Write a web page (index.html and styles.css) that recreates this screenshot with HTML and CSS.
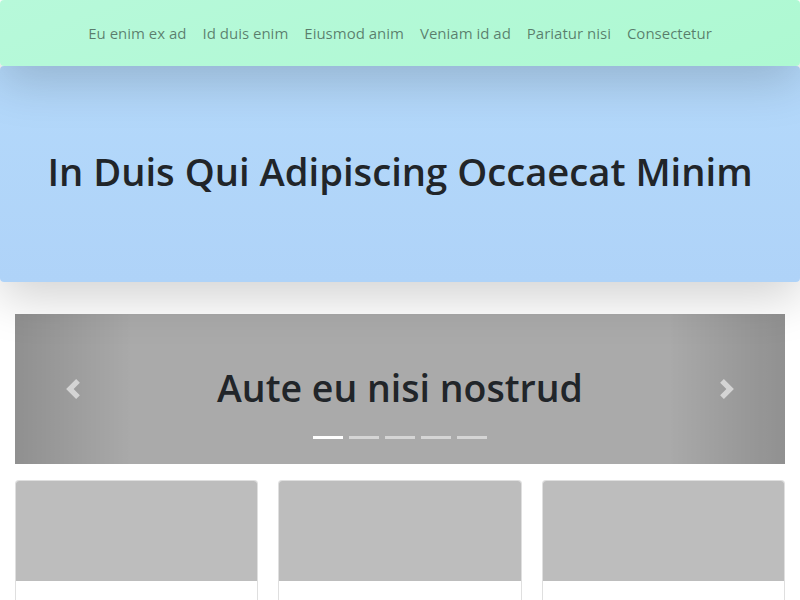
FILE: index.html
```html
<!DOCTYPE html>
<html lang="en">
<head>
<meta charset="utf-8">
<title>In Duis Qui Adipiscing Occaecat Minim</title>
<link rel="stylesheet" href="styles.css">
</head>
<body>
<nav class="navbar">
  <a class="nav-link" href="#">Eu enim ex ad</a>
  <a class="nav-link" href="#">Id duis enim</a>
  <a class="nav-link" href="#">Eiusmod anim</a>
  <a class="nav-link" href="#">Veniam id ad</a>
  <a class="nav-link" href="#">Pariatur nisi</a>
  <a class="nav-link" href="#">Consectetur</a>
</nav>
<header class="jumbotron">
  <h1 class="jumbo-title">In Duis Qui Adipiscing Occaecat Minim</h1>
</header>
<main class="container">
  <section class="carousel">
    <a class="control control-prev" href="#"><svg class="chev" viewBox="0 0 8 8"><path d="M5.25 0l-4 4 4 4 1.5-1.5L4.25 4l2.5-2.5L5.25 0z"/></svg></a>
    <h2 class="slide-title">Aute eu nisi nostrud</h2>
    <a class="control control-next" href="#"><svg class="chev" viewBox="0 0 8 8"><path d="M2.75 0l-1.5 1.5L3.75 4l-2.5 2.5L2.75 8l4-4-4-4z"/></svg></a>
    <ol class="indicators">
      <li class="ind active"></li>
      <li class="ind"></li>
      <li class="ind"></li>
      <li class="ind"></li>
      <li class="ind"></li>
    </ol>
  </section>
  <section class="cards">
    <div class="card"><div class="card-img"></div><div class="card-body"></div></div>
    <div class="card"><div class="card-img"></div><div class="card-body"></div></div>
    <div class="card"><div class="card-img"></div><div class="card-body"></div></div>
  </section>
</main>
</body>
</html>
```
FILE: styles.css
```css
* { box-sizing: border-box; }
body {
  margin: 0;
  font-family: "Open Sans", "Noto Sans", "Liberation Sans", sans-serif;
  color: #212529;
  background: #fff;
}
.navbar {
  position: relative;
  z-index: 2;
  height: 66px;
  display: flex;
  justify-content: center;
  align-items: center;
  background: linear-gradient(160deg, #b7f9da, #aef9d2);
  border-radius: 4px;
  box-shadow: 0 1rem 3rem rgba(0,0,0,.175);
}
.nav-link {
  padding: 8px 8px;
  font-size: 15px;
  color: rgba(0,0,0,.5);
  text-decoration: none;
}
.jumbotron {
  position: relative;
  z-index: 1;
  height: 216px;
  display: flex;
  align-items: center;
  justify-content: center;
  background: linear-gradient(#b4d9fb, #afd3f8);
  border-radius: 4px;
  box-shadow: 0 1rem 3rem rgba(0,0,0,.175);
  margin-bottom: 32px;
}
.jumbo-title {
  margin: 0 0 4px 0;
  font-size: 38.2px;
  font-weight: 600;
  line-height: 1.2;
}
.container {
  padding: 0 15px;
}
.carousel {
  position: relative;
  height: 150px;
  background: #aaa;
  display: flex;
  align-items: center;
  justify-content: center;
  margin-bottom: 16px;
}
.slide-title {
  margin: 0 0 3px 0;
  font-size: 37.5px;
  font-weight: 600;
  line-height: 1.2;
}
.control {
  position: absolute;
  top: 0;
  bottom: 0;
  width: 15%;
  display: flex;
  align-items: center;
  justify-content: center;
  opacity: .5;
}
.control-prev { left: 0; background: linear-gradient(90deg, rgba(0,0,0,.3), rgba(0,0,0,.001)); }
.control-next { right: 0; background: linear-gradient(270deg, rgba(0,0,0,.3), rgba(0,0,0,.001)); }
.chev { width: 20px; height: 20px; fill: #fff; }
.indicators {
  position: absolute;
  left: 0;
  right: 0;
  bottom: 25px;
  margin: 0;
  padding: 0;
  list-style: none;
  display: flex;
  justify-content: center;
  gap: 6px;
}
.ind {
  width: 30px;
  height: 3px;
  background: #fff;
  opacity: .5;
}
.ind.active { opacity: 1; }
.cards {
  display: grid;
  grid-template-columns: repeat(3, 1fr);
  gap: 20px;
}
.card {
  border: 1px solid rgba(0,0,0,.125);
  border-radius: 4px;
  overflow: hidden;
  background: #fff;
}
.card-img {
  height: 100px;
  background: #bdbdbd;
}
.card-body {
  height: 120px;
}
```
